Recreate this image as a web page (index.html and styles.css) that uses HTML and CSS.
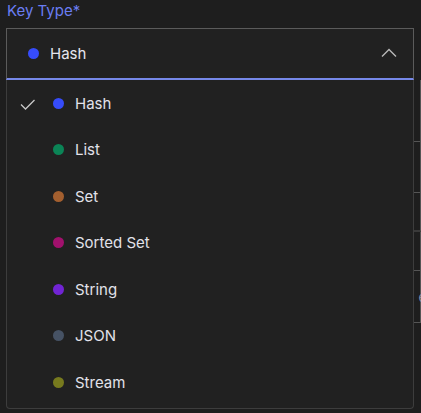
FILE: index.html
```html
<!DOCTYPE html>
<html>
<head>
<meta charset="utf-8">
<link rel="stylesheet" href="styles.css">
</head>
<body>
<div class="page">
  <label class="label">Key Type*</label>
  <div class="field">
    <div class="select">
      <span class="dot dot-hash"></span>
      <span class="value">Hash</span>
      <svg class="chevron" width="16" height="10" viewBox="0 0 16 10"><polyline points="1,8.5 8,1.5 15,8.5" fill="none" stroke="#b8b8b8" stroke-width="1.4"/></svg>
    </div>
    <div class="behind">
      <div class="b-row r1"></div>
      <div class="b-row r2"></div>
      <div class="b-row r3"></div>
      <div class="b-row r4"></div>
      <div class="b-row r5"><span class="peek">e</span></div>
    </div>
    <ul class="menu">
      <li class="item selected">
        <svg class="check" width="16" height="12" viewBox="0 0 16 12"><polyline points="1,5.5 5.5,10 14.5,1" fill="none" stroke="#c8c8c8" stroke-width="1.3"/></svg>
        <span class="dot dot-hash"></span><span class="name">Hash</span>
      </li>
      <li class="item"><span class="dot dot-list"></span><span class="name">List</span></li>
      <li class="item"><span class="dot dot-set"></span><span class="name">Set</span></li>
      <li class="item"><span class="dot dot-zset"></span><span class="name">Sorted Set</span></li>
      <li class="item"><span class="dot dot-string"></span><span class="name">String</span></li>
      <li class="item"><span class="dot dot-json"></span><span class="name">JSON</span></li>
      <li class="item"><span class="dot dot-stream"></span><span class="name">Stream</span></li>
    </ul>
  </div>
</div>
</body>
</html>
```

FILE: styles.css
```css
* { box-sizing: border-box; }
html, body {
  margin: 0;
  padding: 0;
  background: #1e1e1e;
  font-family: Inter, "Noto Sans", sans-serif;
  overflow: hidden;
}
.page {
  width: 421px;
  height: 413px;
  padding-left: 6px;
}
.label {
  display: block;
  font-size: 15px;
  line-height: 20px;
  color: #6a7df2;
  padding-left: 1px;
  padding-top: 1px;
  margin-bottom: 7px;
}
.field {
  position: relative;
  width: 408px;
}
.select {
  height: 52px;
  background: #212121;
  border: 1px solid #5b5b5b;
  border-bottom: 2px solid #7688e8;
  display: flex;
  align-items: center;
  padding-left: 21px;
  padding-right: 16px;
}
.dot {
  width: 11px;
  height: 11px;
  border-radius: 50%;
  flex: none;
}
.value {
  margin-left: 11px;
  color: #e6e6ee;
  font-size: 15px;
  flex: 1;
}
.chevron { flex: none; margin-top: -2px; }
.dot-hash { background: #364cfa; }
.dot-list { background: #0b8456; }
.dot-set { background: #a35f2f; }
.dot-zset { background: #a1116d; }
.dot-string { background: #7124d4; }
.dot-json { background: #465264; }
.dot-stream { background: #777a1e; }

.behind {
  width: 415px;
  height: 333px;
  display: flex;
  flex-direction: column;
}
.b-row {
  border-right: 1px solid #555;
  border-bottom: 1px solid #555;
  position: relative;
}
.r1 { height: 62px; }
.r2 { height: 51px; }
.r3 { height: 39px; border-bottom: 2px solid #3a3a3a; }
.r4 { height: 39px; }
.r5 { height: 52px; }
.peek {
  position: absolute;
  right: -6px;
  top: 18px;
  color: #8a8fa8;
  font-size: 13px;
  line-height: 16px;
}

.menu {
  position: absolute;
  top: 52px;
  left: 0;
  width: 408px;
  height: 329px;
  margin: 0;
  padding: 0 0 2px 0;
  list-style: none;
  background: #212121;
  border: 1px solid #3d3d3d;
  border-top: none;
  border-radius: 0 0 4px 4px;
}
.item {
  height: 46.5px;
  display: flex;
  align-items: center;
  padding-left: 46px;
  position: relative;
}
.check {
  position: absolute;
  left: 13px;
  top: 19px;
}
.name {
  margin-left: 11px;
  color: #e2e2ea;
  font-size: 15px;
}
```
